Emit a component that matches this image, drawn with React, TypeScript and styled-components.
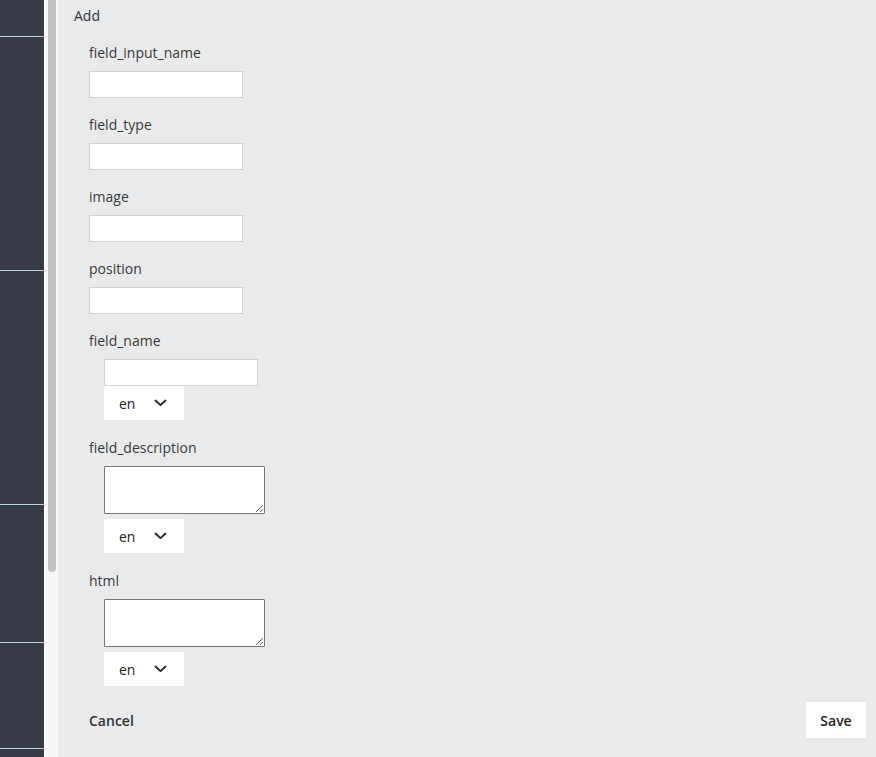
import React from 'react';
import styled, { createGlobalStyle } from 'styled-components';

const GlobalStyle = createGlobalStyle`
  html, body {
    margin: 0;
    padding: 0;
    height: 757px;
    overflow: hidden;
    font-family: 'Open Sans', 'Liberation Sans', sans-serif;
    font-size: 14px;
    color: #333;
  }
`;

const Page = styled.div`
  display: flex;
  height: 757px;
`;

const Sidebar = styled.nav`
  width: 44px;
  background: #353a44;
  display: flex;
  flex-direction: column;
`;

const SideItem = styled.div<{ $h: number }>`
  height: ${(p) => p.$h}px;
  border-bottom: 1px solid #bcd3da;
  flex-shrink: 0;
`;

const ScrollTrack = styled.div`
  width: 14px;
  background: #f8f8f8;
  border-left: 1px solid #fdfdfd;
  box-sizing: border-box;
  padding: 0 2px 0 3px;
`;

const ScrollThumb = styled.div`
  height: 572px;
  background: #c1c1c1;
  border-radius: 0 0 4px 4px;
`;

const Main = styled.main`
  flex: 1;
  background: #e9eaec;
  padding: 6px 10px 0 16px;
  display: flex;
  flex-direction: column;
`;

const Title = styled.div`
  line-height: 19px;
  color: #333;
`;

const Form = styled.div`
  padding: 18px 0 0 15px;
  display: flex;
  flex-direction: column;
`;

const Field = styled.div<{ $after?: number }>`
  margin-bottom: ${(p) => p.$after ?? 17}px;
`;

const Label = styled.div`
  line-height: 19px;
  margin-bottom: 9px;
  color: #3a3a3a;
`;

const TextInput = styled.input`
  display: block;
  box-sizing: border-box;
  width: 154px;
  height: 27px;
  margin: 0;
  border: 1px solid #cfd0d2;
  background: #fff;
  outline: none;
`;

const Translated = styled.div`
  padding-left: 15px;
`;

const TextArea = styled.textarea`
  display: block;
  box-sizing: border-box;
  width: 161px;
  height: 48px;
  margin: 0 0 5px;
  border: 1px solid #767676;
  background: #fff;
  outline: none;
  border-radius: 1px;
`;

const LangSelect = styled.div`
  box-sizing: border-box;
  width: 80px;
  height: 34px;
  background: #fff;
  display: flex;
  align-items: center;
  padding-left: 15px;
  gap: 19px;
  font-size: 14px;
  color: #222;
`;

const Actions = styled.div`
  display: flex;
  justify-content: space-between;
  align-items: center;
  margin-top: -1px;
`;

const CancelLink = styled.span`
  font-weight: 600;
  color: #333;
`;

const SaveButton = styled.button`
  width: 60px;
  height: 36px;
  border: none;
  background: #fff;
  font-family: 'Open Sans', 'Liberation Sans', sans-serif;
  font-size: 14px;
  font-weight: 600;
  color: #222;
  padding: 0;
`;

const Chevron = () => (
  <svg width="13" height="8" viewBox="0 0 13 8" fill="none">
    <path d="M1.5 1.5 L6.5 6.2 L11.5 1.5" stroke="#222" strokeWidth="1.8" strokeLinecap="round" strokeLinejoin="round" />
  </svg>
);

const Lang = () => (
  <LangSelect>
    <span>en</span>
    <Chevron />
  </LangSelect>
);

const plainFields = ['field_input_name', 'field_type', 'image', 'position'];

export default function App() {
  return (
    <>
      <GlobalStyle />
      <Page>
        <Sidebar>
          <SideItem $h={36} />
          <SideItem $h={233} />
          <SideItem $h={233} />
          <SideItem $h={137} />
          <SideItem $h={105} />
        </Sidebar>
        <ScrollTrack>
          <ScrollThumb />
        </ScrollTrack>
        <Main>
          <Title>Add</Title>
          <Form>
            {plainFields.map((f) => (
              <Field key={f}>
                <Label>{f}</Label>
                <TextInput />
              </Field>
            ))}
            <Field $after={18}>
              <Label>field_name</Label>
              <Translated>
                <TextInput />
                <Lang />
              </Translated>
            </Field>
            <Field $after={18}>
              <Label>field_description</Label>
              <Translated>
                <TextArea />
                <Lang />
              </Translated>
            </Field>
            <Field>
              <Label>html</Label>
              <Translated>
                <TextArea />
                <Lang />
              </Translated>
            </Field>
            <Actions>
              <CancelLink>Cancel</CancelLink>
              <SaveButton>Save</SaveButton>
            </Actions>
          </Form>
        </Main>
      </Page>
    </>
  );
}
